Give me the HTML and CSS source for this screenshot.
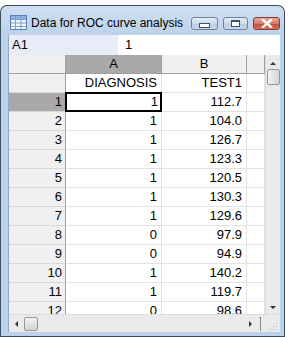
FILE: index.html
```html
<!DOCTYPE html>
<html lang="en">
<head>
    <meta charset="UTF-8">
    <title>Data for ROC curve analysis</title>
    <link rel="stylesheet" href="styles.css">
</head>
<body>
    <div class="window">
        <div class="titlebar">
            <svg class="app-icon" width="17" height="15" viewBox="0 0 17 15">
                <rect x="0.5" y="0.5" width="16" height="14" fill="#f4f8fd" stroke="#5a7fb6"/>
                <rect x="1" y="1" width="15" height="3" fill="#8fb0e0"/>
                <path d="M1 4.5h15M1 8h15M1 11.5h15M5.5 1v13M11 1v13" stroke="#7e9fd2" stroke-width="1"/>
            </svg>
            <span class="title">Data for ROC curve analysis</span>
            <div class="controls">
                <div class="ctl"><span class="min-mark"></span></div>
                <div class="ctl max"><span class="max-mark"></span></div>
                <div class="ctl close">
                    <svg width="12" height="9" viewBox="0 0 12 9">
                        <path d="M2 1l8 7M10 1l-8 7" stroke="#fff" stroke-width="2.4" stroke-linecap="square"/>
                    </svg>
                </div>
            </div>
        </div>

        <div class="client">
            <div class="namebar">
                <div class="cellref">A1</div>
                <div class="cellval">1</div>
            </div>

            <div class="sheet">
                <div class="grid">
                    <div class="hd corner"></div>
                    <div class="hd col sel">A</div>
                    <div class="hd col">B</div>
                    <div class="hd col"></div>

                    <div class="rh"></div>
                    <div class="c">DIAGNOSIS</div>
                    <div class="c">TEST1</div>
                    <div class="c"></div>

                    <div class="rh sel">1</div>
                    <div class="c active">1</div>
                    <div class="c">112.7</div>
                    <div class="c"></div>

                    <div class="rh">2</div><div class="c">1</div><div class="c">104.0</div><div class="c"></div>
                    <div class="rh">3</div><div class="c">1</div><div class="c">126.7</div><div class="c"></div>
                    <div class="rh">4</div><div class="c">1</div><div class="c">123.3</div><div class="c"></div>
                    <div class="rh">5</div><div class="c">1</div><div class="c">120.5</div><div class="c"></div>
                    <div class="rh">6</div><div class="c">1</div><div class="c">130.3</div><div class="c"></div>
                    <div class="rh">7</div><div class="c">1</div><div class="c">129.6</div><div class="c"></div>
                    <div class="rh">8</div><div class="c">0</div><div class="c">97.9</div><div class="c"></div>
                    <div class="rh">9</div><div class="c">0</div><div class="c">94.9</div><div class="c"></div>
                    <div class="rh">10</div><div class="c">1</div><div class="c">140.2</div><div class="c"></div>
                    <div class="rh">11</div><div class="c">1</div><div class="c">119.7</div><div class="c"></div>
                    <div class="rh">12</div><div class="c">0</div><div class="c">98.6</div><div class="c"></div>
                </div>

                <div class="vscroll">
                    <span class="arrow up"></span>
                    <span class="thumb v"></span>
                    <span class="track"></span>
                    <span class="arrow down"></span>
                </div>
            </div>

            <div class="hscroll">
                <span class="arrow left"></span>
                <span class="thumb h"></span>
                <span class="track"></span>
                <span class="arrow right"></span>
                <span class="bracket"></span>
                <svg class="grip" width="10" height="9" viewBox="0 0 10 9">
                    <path d="M8 1h1v1H8zM5 4h1v1H5zM8 4h1v1H8zM2 7h1v1H2zM5 7h1v1H5zM8 7h1v1H8z" fill="#a9b3bf"/>
                </svg>
            </div>
        </div>
    </div>
</body>
</html>
```

FILE: styles.css
```css
body {
    margin: 0;
    background: #fff;
    font-family: 'Liberation Sans', Arial, sans-serif;
    color: #000;
}

.window {
    margin-top: 5px;
    width: 285px;
    box-sizing: border-box;
    border: 1px solid #3c4d60;
    border-bottom-width: 2px;
    border-radius: 7px 7px 0 0;
    background: linear-gradient(#cfdff2, #bcd1ea 30px, #bcd1ea);
}

.titlebar {
    height: 26px;
    display: flex;
    align-items: center;
    padding: 2px 4px 0 9px;
}

.app-icon {
    flex: none;
    margin-top: 3px;
}

.title {
    margin-left: 4px;
    font-size: 12px;
    margin-top: 4px;
}

.controls {
    margin-left: auto;
    display: flex;
    gap: 5px;
    margin-top: 5px;
}

.ctl {
    width: 27px;
    height: 13px;
    box-sizing: border-box;
    border: 1px solid #6f829a;
    border-radius: 3px;
    background: linear-gradient(#e6eef8, #ccdaeb 50%, #b8cbe3 51%, #c9d9ec);
    display: flex;
    align-items: center;
    justify-content: center;
}

.ctl.max {
    width: 25px;
}

.ctl.close {
    border-color: #8a3a33;
    background: linear-gradient(#e5a99b, #d37b6b 50%, #c4493a 51%, #d0715e);
}

.min-mark {
    width: 9px;
    height: 3px;
    margin-top: 3px;
    background: #fff;
    border: 1px solid #3d5068;
}

.max-mark {
    width: 7px;
    height: 4px;
    background: #fff;
    border: 1px solid #3d5068;
    border-top-width: 2px;
}

.client {
    margin: 1px 4px 4px 7px;
    background: #fff;
    border-left: 1px solid #97a9be;
}

.namebar {
    height: 20px;
    display: flex;
    font-size: 13px;
    line-height: 20px;
}

.cellref {
    width: 106px;
    padding-left: 3px;
    background: #e8ecf8;
}

.cellval {
    padding-left: 7px;
}

.sheet {
    display: flex;
    height: 259px;
    overflow: hidden;
}

.grid {
    display: grid;
    grid-template-columns: 57px 96px 85px 18px;
    grid-auto-rows: 19px;
    font-size: 13px;
    align-content: start;
}

.grid > div {
    box-sizing: border-box;
    line-height: 18px;
    white-space: nowrap;
}

.hd {
    background: #f0f0f0;
    border-right: 1px solid #a0a0a0;
    border-bottom: 1px solid #a0a0a0;
    text-align: center;
}

.hd.sel,
.rh.sel {
    background: #a9a9a9;
}

.rh {
    background: #f0f0f0;
    border-right: 1px solid #a0a0a0;
    border-bottom: 1px solid #d9d9d9;
    text-align: right;
    padding-right: 3px;
}

.c {
    border-right: 1px solid #e2e2e2;
    border-bottom: 1px solid #e2e2e2;
    text-align: right;
    padding-right: 4px;
}

.c.active {
    border: 2px solid #000;
    line-height: 15px !important;
    padding-right: 2px;
    margin: -1px 0 0 -1px;
}

.vscroll {
    width: 15px;
    background: #eaeaea;
    display: flex;
    flex-direction: column;
    align-items: center;
    border-left: 1px solid #dcdcdc;
}

.hscroll {
    height: 17px;
    background: #eaeaea;
    display: flex;
    align-items: center;
    border-top: 1px solid #dcdcdc;
}

.track {
    flex: 1;
}

.arrow {
    width: 0;
    height: 0;
    flex: none;
}

.arrow.up {
    margin: 7px 0 4px;
    border: 3px solid transparent;
    border-bottom: 3px solid #333;
    border-top: 0;
}

.arrow.down {
    margin: 4px 0 5px;
    border: 3px solid transparent;
    border-top: 3px solid #333;
    border-bottom: 0;
}

.arrow.left {
    margin: 0 5px 0 6px;
    border: 3px solid transparent;
    border-right: 3px solid #333;
    border-left: 0;
}

.arrow.right {
    margin-right: 7px;
    border: 3px solid transparent;
    border-left: 3px solid #333;
    border-right: 0;
}

.thumb {
    box-sizing: border-box;
    border: 1px solid #979797;
    border-radius: 2px;
    flex: none;
}

.thumb.v {
    width: 13px;
    height: 16px;
    background: linear-gradient(90deg, #f3f3f3, #e2e2e2 50%, #d6d6d6);
}

.thumb.h {
    width: 14px;
    height: 14px;
    margin-left: 1px;
    background: linear-gradient(#f3f3f3, #e2e2e2 50%, #d6d6d6);
}

.bracket {
    width: 2px;
    height: 14px;
    border-top: 1px solid #888;
    border-right: 1px solid #888;
    box-sizing: border-box;
    margin-right: 7px;
}

.grip {
    margin-top: 6px;
    margin-right: 2px;
}
```
